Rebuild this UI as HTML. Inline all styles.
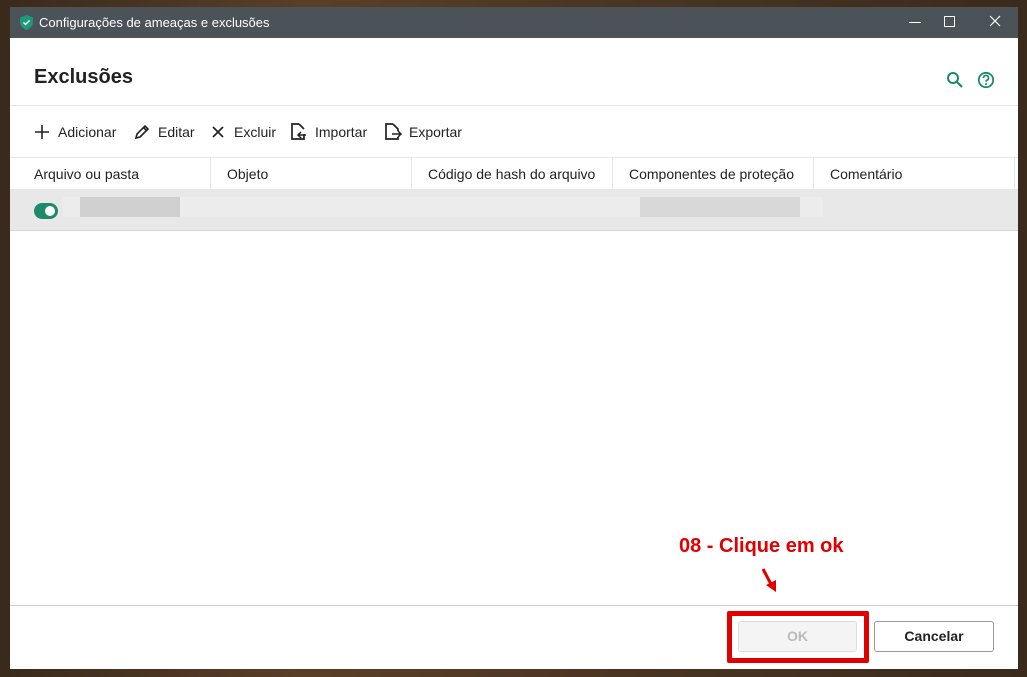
<!DOCTYPE html><html><head><style>
body{margin:0;width:1027px;height:677px;overflow:hidden;background:linear-gradient(90deg,#3a2a1c,#5a3f28 30%,#4a3522 60%,#3b2b1d);font-family:"Liberation Sans",sans-serif;position:relative}
.win{position:absolute;left:10px;top:7px;width:1008px;height:662px;background:#fff}
.tb{position:absolute;left:0;top:0;width:1008px;height:31px;background:#4b5258;color:#fff;font-size:13px}
.abs{position:absolute}
.hdr{font-size:14px;color:#222}
.col{position:absolute;top:150px;height:32px;border-right:1px solid #e6e6e6;font-size:14px;color:#222;line-height:34px;padding-left:16px;box-sizing:border-box}
</style></head><body>
<div class="win">
<div class="tb">
<svg class="abs" style="left:10px;top:8px" width="13" height="15" viewBox="0 0 13 15"><path d="M6.5 0L13 2.5V7c0 4-3 6.5-6.5 8C3 13.5 0 11 0 7V2.5z" fill="#1d9a78"/><path d="M3.5 7.5l2 2 4-4" stroke="#fff" stroke-width="1.5" fill="none"/></svg>
<div class="abs" style="left:29px;top:8px">Configurações de ameaças e exclusões</div>
<div class="abs" style="left:899px;top:15px;width:12px;height:1px;background:#fff"></div>
<div class="abs" style="left:934px;top:9px;width:9px;height:9px;border:1px solid #fff"></div>
<svg class="abs" style="left:979px;top:8px" width="12" height="12"><path d="M1 1L11 11M11 1L1 11" stroke="#fff" stroke-width="1.2"/></svg>
</div>
<div class="abs" style="left:24px;top:59px;font-size:20px;font-weight:bold;color:#222">Exclusões</div>
<svg class="abs" style="left:936px;top:64px" width="18" height="18"><circle cx="7" cy="7" r="5" stroke="#1d8a6c" stroke-width="2" fill="none"/><path d="M11 11l5 5" stroke="#1d8a6c" stroke-width="2.2"/></svg>
<svg class="abs" style="left:967px;top:64px" width="18" height="18"><circle cx="9" cy="9" r="7.2" stroke="#1d8a6c" stroke-width="1.8" fill="none"/><path d="M6.5 7a2.5 2.5 0 1 1 3.3 2.3c-.6.3-.8.7-.8 1.4" stroke="#1d8a6c" stroke-width="1.7" fill="none"/><circle cx="9" cy="13" r="1" fill="#1d8a6c"/></svg>
<div class="abs" style="left:0;top:98px;width:1008px;height:1px;background:#e6e6e6"></div>
<svg class="abs" style="left:25px;top:118px" width="14" height="14"><path d="M7 0v14M0 7h14" stroke="#222" stroke-width="1.6"/></svg>
<div class="abs hdr" style="left:48px;top:117px">Adicionar</div>
<svg class="abs" style="left:124px;top:117px" width="16" height="16"><path d="M2 14l1-4 8-8 3 3-8 8z M9.5 3.5l3 3" stroke="#222" stroke-width="1.6" fill="none"/></svg>
<div class="abs hdr" style="left:148px;top:117px">Editar</div>
<svg class="abs" style="left:202px;top:119px" width="12" height="12"><path d="M1 1l10 10M11 1L1 11" stroke="#222" stroke-width="1.7"/></svg>
<div class="abs hdr" style="left:224px;top:117px">Excluir</div>
<svg class="abs" style="left:280px;top:116px" width="17" height="17"><path d="M9 1H2v15h12v-5 M9 1l5 5" stroke="#222" stroke-width="1.7" fill="none"/><path d="M16 12H8m3-3l-3 3 3 3" stroke="#222" stroke-width="1.5" fill="none"/></svg>
<div class="abs hdr" style="left:305px;top:117px">Importar</div>
<svg class="abs" style="left:374px;top:116px" width="18" height="17"><path d="M9 1H2v15h12v-2 M9 1l5 5v2" stroke="#222" stroke-width="1.7" fill="none"/><path d="M8 11h9m-3-3l3 3-3 3" stroke="#222" stroke-width="1.5" fill="none"/></svg>
<div class="abs hdr" style="left:399px;top:117px">Exportar</div>
<div class="abs" style="left:0;top:150px;width:1008px;height:1px;background:#e6e6e6"></div>
<div class="col" style="left:8px;width:193px">Arquivo ou pasta</div>
<div class="col" style="left:201px;width:201px">Objeto</div>
<div class="col" style="left:402px;width:201px">Código de hash do arquivo</div>
<div class="col" style="left:603px;width:201px">Componentes de proteção</div>
<div class="col" style="left:804px;width:201px">Comentário</div>
<div class="abs" style="left:0;top:182px;width:1008px;height:41px;background:#e8e8e8;border-bottom:1px solid #d6d6d6"></div>
<div class="abs" style="left:53px;top:190px;width:760px;height:20px;background:#ececec"></div>
<div class="abs" style="left:70px;top:190px;width:100px;height:20px;background:#d0d0d0"></div>
<div class="abs" style="left:630px;top:190px;width:160px;height:20px;background:#d8d8d8"></div>
<div class="abs" style="left:24px;top:196px;width:24px;height:16px;border-radius:8px;background:#1d8a6c"></div>
<div class="abs" style="left:35px;top:199px;width:10px;height:10px;border-radius:5px;background:#fff"></div>
<div class="abs" style="left:0;top:598px;width:1008px;height:1px;background:#ccc"></div>
<div class="abs" style="left:717px;top:604px;width:142px;height:52px;border:5px solid #e00000;box-sizing:border-box;border-radius:2px"></div>
<div class="abs" style="left:728px;top:614px;width:119px;height:31px;border:1px solid #ddd;background:#f4f4f4;border-radius:3px;box-sizing:border-box;text-align:center;line-height:29px;font-size:14px;font-weight:bold;color:#bbb">OK</div>
<div class="abs" style="left:864px;top:614px;width:120px;height:31px;border:1px solid #999;border-radius:3px;box-sizing:border-box;text-align:center;line-height:29px;font-size:14px;font-weight:bold;color:#222">Cancelar</div>
<div class="abs" style="left:669px;top:528px;font-size:20px;font-weight:bold;color:#e00000;text-shadow:0 0 2px #fff,1px 1px 2px #fff">08 - Clique em ok</div>
<svg class="abs" style="left:750px;top:560px" width="20" height="30"><path d="M3 2l9 17" stroke="#e00000" stroke-width="3"/><path d="M6 18l10 7 0-12z" fill="#e00000"/></svg>
</div>
</body></html>
